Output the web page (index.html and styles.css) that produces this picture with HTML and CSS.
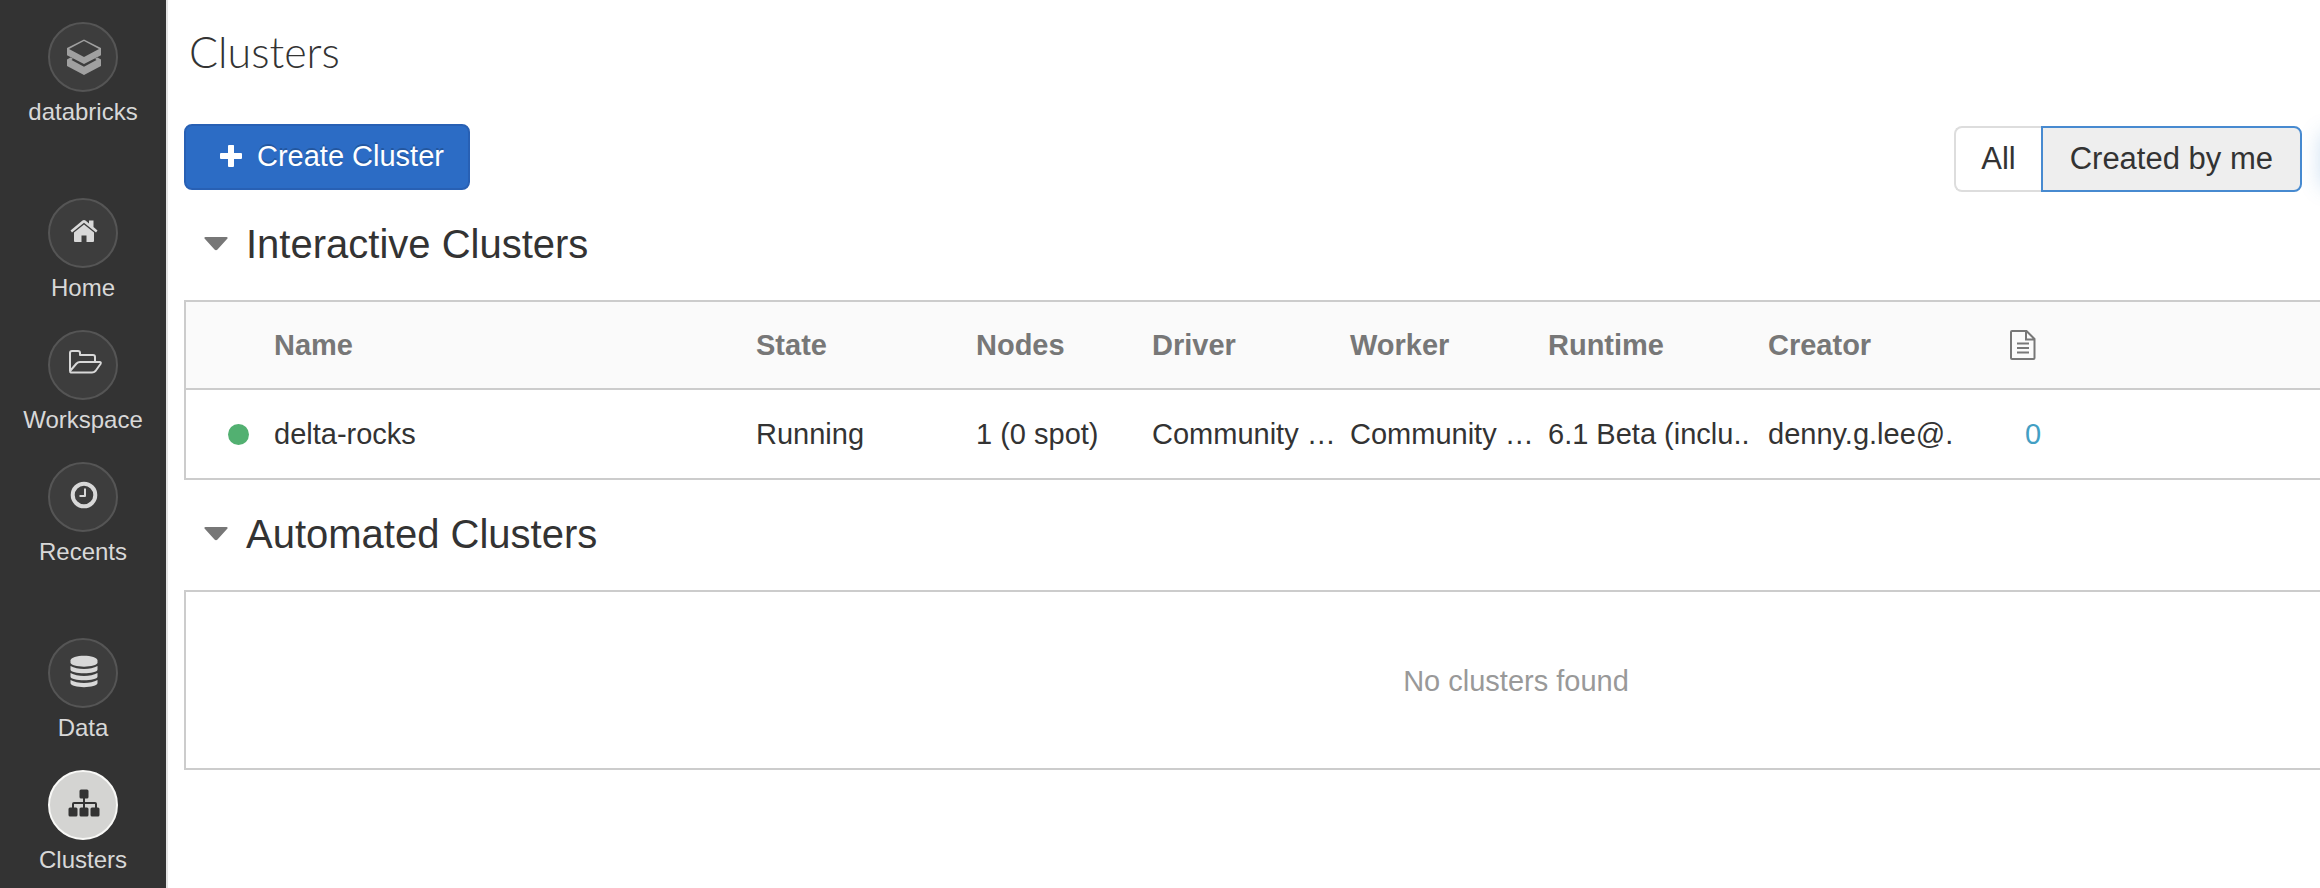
FILE: index.html
```html
<!DOCTYPE html>
<html lang="en">
<head>
<meta charset="utf-8">
<title>Clusters</title>
<link rel="stylesheet" href="styles.css">
</head>
<body>
<div class="app">
  <nav class="sidebar" aria-label="Main">
    <a class="nav-item" href="#">
      <span class="nav-circle">
        <svg class="nav-icon muted" viewBox="0 0 70 70" aria-hidden="true">
          <path fill-rule="evenodd" d="M36 17.500 53 26V33.300L36 42 19 33.300V26ZM36 19 21 27 36 35 51 27Z"/>
          <path d="M19 37.500 22.500 35.500 25 36.800 23.500 38 36 44.800 48.500 38 47 36.800 49.500 35.500 53 37.500V44L36 53 19 44Z"/>
        </svg>
      </span>
      <span class="nav-label">databricks</span>
    </a>
    <a class="nav-item group-start" href="#">
      <span class="nav-circle">
        <svg class="nav-icon" viewBox="0 0 70 70" aria-hidden="true">
          <path d="M36 26.500 46 34.500V43Q46 44 45 44H38.500V37.500H33.500V44H27Q26 44 26 43V34.500Z"/>
          <path d="M34.500 22.500Q36 21.300 37.500 22.500L41 25.500V22.500H45.500V29L49.500 32.500 48 34.500 36 24.800 24 34.500 22.500 32.500Z"/>
        </svg>
      </span>
      <span class="nav-label">Home</span>
    </a>
    <a class="nav-item" href="#">
      <span class="nav-circle">
        <svg class="nav-icon outline" viewBox="0 0 70 70" aria-hidden="true">
          <path d="M22 41V23Q22 21 24 21H30Q32 21 32 23V25H45Q47 25 47 27V31.500M23 42.500H44Q46 42.500 47.500 41L52.500 34Q53.500 32 51.500 32H32Q30 32 28.500 33.500L22.500 40.500Q21.500 42 23 42.500Z"/>
        </svg>
      </span>
      <span class="nav-label">Workspace</span>
    </a>
    <a class="nav-item" href="#">
      <span class="nav-circle">
        <svg class="nav-icon outline" viewBox="0 0 70 70" aria-hidden="true">
          <circle class="thick" cx="36" cy="33" r="11.300"/>
          <path d="M37 26.500V34H31.500"/>
        </svg>
      </span>
      <span class="nav-label">Recents</span>
    </a>
    <a class="nav-item group-start" href="#">
      <span class="nav-circle">
        <svg class="nav-icon" viewBox="0 0 70 70" aria-hidden="true">
          <path d="M22.500 22.500C22.500 16 49.500 16 49.500 22.500V24.500C49.500 30 22.500 30 22.500 24.500Z"/>
          <path d="M22.500 28Q28 31 36 31T49.500 28V31.500C49.500 36.500 22.500 36.500 22.500 31.500Z"/>
          <path d="M22.500 35Q28 38 36 38T49.500 35V38.500C49.500 43.500 22.500 43.500 22.500 38.500Z"/>
          <path d="M22.500 42Q28 45 36 45T49.500 42V45C49.500 50.500 22.500 50.500 22.500 45Z"/>
        </svg>
      </span>
      <span class="nav-label">Data</span>
    </a>
    <a class="nav-item active" href="#" aria-current="page">
      <span class="nav-circle">
        <svg class="nav-icon" viewBox="0 0 70 70" aria-hidden="true">
          <rect x="31.500" y="19.500" width="9" height="9" rx="1.500"/>
          <rect x="20.500" y="37.500" width="9" height="9" rx="1.500"/>
          <rect x="31.500" y="37.500" width="9" height="9" rx="1.500"/>
          <rect x="42.500" y="37.500" width="9" height="9" rx="1.500"/>
          <path d="M35 28H37V32H47Q49 32 49 34V38H47V34H37V38H35V34H26V38H24V34Q24 32 26 32H35Z"/>
        </svg>
      </span>
      <span class="nav-label">Clusters</span>
    </a>
  </nav>

  <main class="content">
    <h1 class="page-title">Clusters</h1>

    <div class="toolbar">
      <button class="create-button" type="button">
        <svg class="plus-icon" viewBox="0 0 22 22" aria-hidden="true"><path d="M8.500 0H13.500Q14 0 14 1V8H21Q22 8 22 9V13Q22 14 21 14H14V21Q14 22 13 22H9Q8 22 8 21V14H1Q0 14 0 13V9Q0 8 1 8H8V1Q8 0 9 0Z"/></svg>
        Create Cluster
      </button>
      <div class="filter" role="group" aria-label="Filter clusters">
        <button class="filter-button" type="button" aria-pressed="false">All</button>
        <button class="filter-button selected" type="button" aria-pressed="true">Created by me</button>
      </div>
    </div>

    <section class="section">
      <h2 class="section-title">
        <svg class="caret" viewBox="0 0 24 14" aria-hidden="true"><path d="M1.500 0H22.500Q24.500 .5 23 2L13.500 12.500Q12 14 10.500 12.500L1 2Q-.5.5 1.500 0Z"/></svg>
        Interactive Clusters
      </h2>
      <div class="panel">
        <table class="clusters">
          <colgroup>
            <col class="col-status">
            <col class="col-name">
            <col class="col-wide">
            <col class="col-nodes">
            <col class="col-type">
            <col class="col-type">
            <col class="col-wide">
            <col class="col-wide">
            <col>
          </colgroup>
          <thead>
            <tr>
              <th></th>
              <th scope="col">Name</th>
              <th scope="col">State</th>
              <th scope="col">Nodes</th>
              <th scope="col">Driver</th>
              <th scope="col">Worker</th>
              <th scope="col">Runtime</th>
              <th scope="col">Creator</th>
              <th scope="col" class="notebooks" aria-label="Notebooks">
                <svg class="doc-icon" viewBox="0 0 26 30" aria-hidden="true"><path d="M2 1H16.500L24.500 9V28Q24.500 29 23.500 29H2Q1 29 1 28V2Q1 1 2 1ZM16 1V9.500H24.500M7 13.500H19M7 18H19M7 22.500H19"/></svg>
              </th>
            </tr>
          </thead>
          <tbody>
            <tr>
              <td class="status"><span class="status-dot"></span></td>
              <td>delta-rocks</td>
              <td>Running</td>
              <td>1 (0 spot)</td>
              <td>Community …</td>
              <td>Community …</td>
              <td>6.1 Beta (inclu..</td>
              <td>denny.g.lee@.</td>
              <td class="notebooks"><a class="count" href="#">0</a></td>
            </tr>
          </tbody>
        </table>
      </div>
    </section>

    <section class="section">
      <h2 class="section-title">
        <svg class="caret" viewBox="0 0 24 14" aria-hidden="true"><path d="M1.500 0H22.500Q24.500 .5 23 2L13.500 12.500Q12 14 10.500 12.500L1 2Q-.5.5 1.500 0Z"/></svg>
        Automated Clusters
      </h2>
      <div class="panel empty">No clusters found</div>
    </section>
  </main>
</div>
</body>
</html>
```

FILE: styles.css
```css
* {
  box-sizing: border-box;
}

body {
  margin: 0;
  background: #fff;
  color: #333;
  font-family: "Liberation Sans", Arial, sans-serif;
  font-size: 29px;
}

button {
  margin: 0;
  font-family: inherit;
  cursor: pointer;
}

.app {
  display: flex;
  min-height: 100vh;
}

/* Sidebar */
.sidebar {
  flex: 0 0 168px;
  display: flex;
  flex-direction: column;
  gap: 28px;
  padding-top: 22px;
  background: #333;
  border-right: 2px solid #e3e3e3;
}

.nav-item {
  display: flex;
  flex-direction: column;
  align-items: center;
  gap: 6px;
  color: #d8d8d8;
  font-size: 24px;
  line-height: 28px;
  text-decoration: none;
}

.group-start {
  margin-top: 44px;
}

.nav-circle {
  width: 70px;
  height: 70px;
  border: 2px solid #555;
  border-radius: 50%;
  background: #3d3d3d;
}

.nav-icon {
  display: block;
  width: 70px;
  height: 70px;
  margin: -2px;
  fill: #d8d8d8;
}

.nav-icon.muted {
  fill: #a0a0a0;
}

.nav-icon.outline {
  fill: none;
  stroke: #d8d8d8;
  stroke-width: 2;
  stroke-linejoin: round;
}

.outline .thick {
  stroke-width: 4;
}

.active .nav-circle {
  border-color: #f8f8f6;
  background: #d4d4d2;
}

.active .nav-icon {
  fill: #333;
}

/* Content */
.content {
  flex: 1;
  min-width: 0;
  padding: 24px 0 0 16px;
  overflow: hidden;
}

.page-title {
  margin: 0 0 44px;
  padding-left: 5px;
  font-family: Lato, "Liberation Sans", sans-serif;
  font-size: 43px;
  font-weight: 300;
  line-height: 56px;
}

.toolbar {
  position: relative;
  display: flex;
  justify-content: space-between;
  align-items: flex-start;
  padding-right: 18px;
}

/* Soft glow at the right edge of the toolbar */
.toolbar::after {
  content: "";
  position: absolute;
  top: 8px;
  right: -60px;
  width: 60px;
  height: 56px;
  border-radius: 8px;
  box-shadow: 0 0 20px rgba(71, 138, 208, 0.25);
}

.create-button {
  display: flex;
  align-items: center;
  gap: 15px;
  height: 66px;
  padding: 0 24px 2px 34px;
  border: 2px solid #2860b4;
  border-radius: 8px;
  background: #2c6cc5;
  color: #fff;
  font-size: 29px;
  text-shadow: 0 -2px 0 rgba(0, 0, 0, 0.2);
}

.plus-icon {
  width: 22px;
  height: 22px;
  fill: #fff;
}

.filter {
  display: flex;
  margin-top: 2px;
}

.filter-button {
  height: 66px;
  padding: 0 25px;
  border: 2px solid #ddd;
  border-right: 0;
  border-radius: 8px 0 0 8px;
  background: #fff;
  color: #333;
  font-size: 31px;
}

.filter-button.selected {
  padding: 0 27px;
  border: 2px solid #478ad0;
  border-radius: 0 8px 8px 0;
  background: #eee;
}

.section + .section {
  margin-top: 2px;
}

.section-title {
  display: flex;
  align-items: center;
  gap: 18px;
  height: 108px;
  margin: 0;
  padding: 0 0 4px 20px;
  font-size: 40px;
  font-weight: 400;
}

.caret {
  width: 24px;
  height: 14px;
  fill: #777;
}

/* Panels run past the right edge of the window */
.panel {
  margin-right: -528px;
  border: 2px solid #ccc;
}

.clusters {
  width: 100%;
  border-collapse: separate;
  border-spacing: 0;
  table-layout: fixed;
}

.col-status {
  width: 88px;
}

.col-name {
  width: 482px;
}

.col-wide {
  width: 220px;
}

.col-nodes {
  width: 176px;
}

.col-type {
  width: 198px;
}

.clusters th,
.clusters td {
  height: 88px;
  padding: 0;
  text-align: left;
  vertical-align: middle;
  white-space: nowrap;
}

.clusters th {
  border-bottom: 2px solid #ccc;
  background: #fafafa;
  color: #777;
}

.clusters .status {
  padding-left: 42px;
}

.status-dot {
  display: block;
  width: 21px;
  height: 21px;
  border-radius: 50%;
  background: #52b071;
}

.clusters th.notebooks {
  padding-left: 22px;
}

.clusters td.notebooks {
  padding-left: 37px;
}

.doc-icon {
  display: block;
  width: 26px;
  height: 30px;
  fill: none;
  stroke: #777;
  stroke-width: 2;
}

.count {
  color: #439fc4;
  text-decoration: none;
}

.empty {
  display: flex;
  align-items: center;
  justify-content: center;
  min-height: 180px;
  padding-top: 2px;
  color: #999;
}
```
